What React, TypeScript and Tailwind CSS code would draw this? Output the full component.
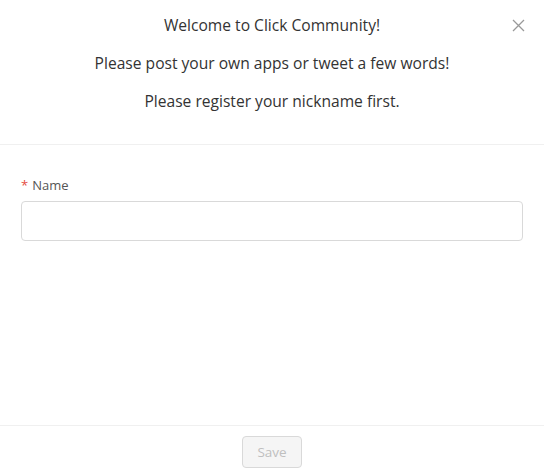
import React from "react";

export default function App() {
	return (
		<div className="relative flex h-[476px] w-[544px] flex-col bg-white font-['Open_Sans',sans-serif] text-[#333]">
			<button className="absolute right-[19px] top-[19px] p-0 text-[#999]">
				<svg width="13" height="13" viewBox="0 0 13 13" fill="none" stroke="currentColor" strokeWidth="1.3">
					<path d="M1 1 L12 12 M12 1 L1 12" />
				</svg>
			</button>

			<div className="border-b border-[#f0f0f0] pb-[24px] pt-[6px] text-center text-[15.6px] leading-[38px]">
				<p>Welcome to Click Community!</p>
				<p>Please post your own apps or tweet a few words!</p>
				<p>Please register your nickname first.</p>
			</div>

			<div className="flex-1 px-[21px] pt-[29px]">
				<label className="mb-[5px] flex items-center text-[13px] leading-[22px] text-[#555]">
					<span className="mr-[4px] text-[#e54d42]">*</span>
					Name
				</label>
				<input className="h-[40px] w-full rounded-[4px] border border-[#d9d9d9] px-3 text-sm outline-none" />
			</div>

			<div className="flex justify-center border-t border-[#f0f0f0] pb-[8px] pt-[10px]">
				<button
					disabled
					className="h-[32px] w-[60px] rounded-[4px] border border-[#d9d9d9] bg-[#f5f5f5] text-[13.5px] text-[#bfbfbf]"
				>
					Save
				</button>
			</div>
		</div>
	);
}
